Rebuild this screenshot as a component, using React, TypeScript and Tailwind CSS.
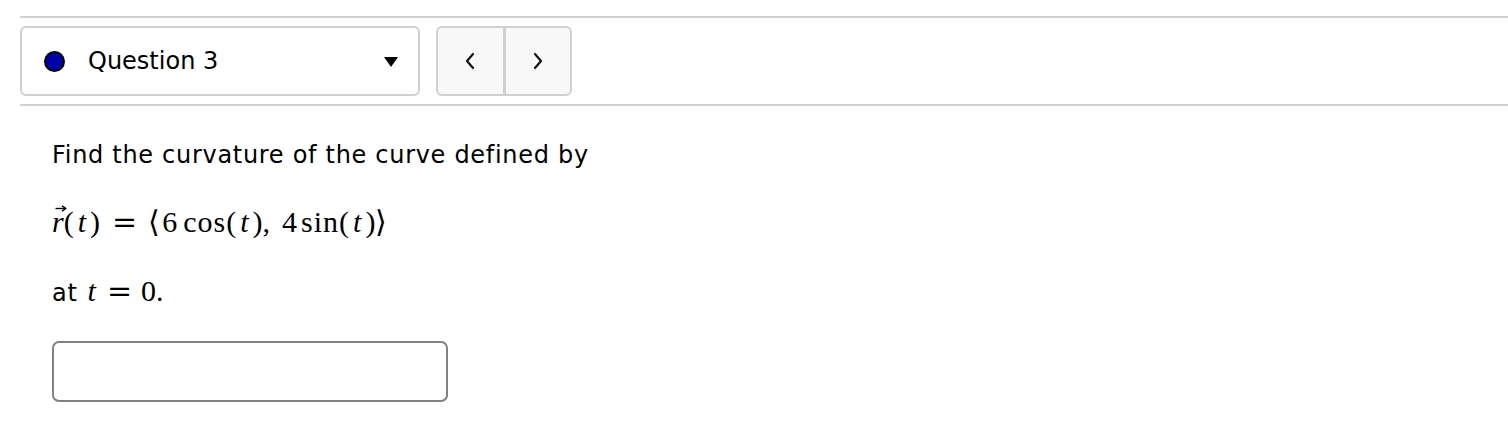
import React from 'react';

const Chevron = ({ dir }: { dir: 'left' | 'right' }) => (
  <svg width="12" height="18" viewBox="0 0 12 18" className="block">
    <polyline
      points={dir === 'left' ? '9,2 3,9 9,16' : '3,2 9,9 3,16'}
      fill="none"
      stroke="#111"
      strokeWidth="2.2"
      strokeLinecap="round"
      strokeLinejoin="round"
    />
  </svg>
);

// italic math variable with a bit of side bearing, like TeX math italic
const T = () => <span className="italic mx-[4px]">t</span>;

const Eq = ({ className = '' }: { className?: string }) => (
  <span className={`font-['DejaVu_Serif',serif] ${className}`}>=</span>
);

// vector arrow above a letter
const Vec = ({ children }: { children: React.ReactNode }) => (
  <span className="relative inline-block">
    <span className="italic">{children}</span>
    <svg width="12" height="7" viewBox="0 0 12 7" className="absolute left-[3px] top-[-1px]">
      <line x1="0.5" y1="3.5" x2="10" y2="3.5" stroke="#000" strokeWidth="1.4" />
      <polyline points="7,0.8 11,3.5 7,6.2" fill="none" stroke="#000" strokeWidth="1.4" strokeLinejoin="round" />
    </svg>
  </span>
);

const App: React.FC = () => {
  return (
    <div className="w-[1508px] h-[444px] bg-white overflow-hidden font-['DejaVu_Sans',sans-serif] text-black">
      <div className="pl-5 pt-4">
        <div className="border-t-2 border-[#d0d0d0]" />

        {/* question nav */}
        <div className="flex items-center mt-[8px] h-[70px]">
          <div className="w-[400px] h-[70px] border-2 border-[#d0d0d0] rounded-[6px] flex items-center pl-[22px] pr-[20px]">
            <span className="w-[21px] h-[21px] rounded-full bg-[#0000a8] border-2 border-black shrink-0" />
            <span className="ml-[23px] text-[24px]">Question 3</span>
            <svg width="14" height="10" viewBox="0 0 14 10" className="ml-auto mt-[2px]">
              <polygon points="0,0 14,0 7,10" fill="#000" />
            </svg>
          </div>
          <div className="ml-[16px] h-[70px] w-[136px] flex border-2 border-[#d0d0d0] rounded-[6px] bg-[#f8f8f8] overflow-hidden">
            <div className="flex-1 flex items-center justify-center border-r-[3px] border-[#d0d0d0]">
              <Chevron dir="left" />
            </div>
            <div className="flex-1 flex items-center justify-center">
              <Chevron dir="right" />
            </div>
          </div>
        </div>

        <div className="border-t-2 border-[#d0d0d0] mt-[8px]" />

        {/* problem */}
        <div className="pl-8 pt-[34px]">
          <p className="text-[24px] leading-[30px] tracking-[0.7px]">Find the curvature of the curve defined by</p>
          <p className="mt-[36px] text-[30px] leading-[32px] font-['Liberation_Serif',serif] whitespace-nowrap">
            <Vec>r</Vec>(<T />)
            <Eq className="ml-[12px]" />
            <span className="ml-[11px]">⟨</span>
            <span className="ml-[2px]">6</span>
            <span className="ml-[6px] tracking-[1px]">cos</span>(<T />),
            <span className="ml-[12px]">4</span>
            <span className="ml-[4px] tracking-[1px]">sin</span>(<T />)⟩
          </p>
          <p className="mt-[38px] text-[24px] leading-[30px] tracking-[0.7px] whitespace-nowrap">
            at
            <span className="font-['Liberation_Serif',serif] text-[30px] tracking-normal">
              <span className="ml-[10px] italic">t</span>
              <Eq className="ml-[11px]" />
              <span className="ml-[9px]">0.</span>
            </span>
          </p>
          <input
            type="text"
            aria-label="answer"
            className="mt-[33px] block w-[396px] h-[61px] border-2 border-[#808080] rounded-[7px] bg-white outline-none"
          />
        </div>
      </div>
    </div>
  );
};

export default App;
